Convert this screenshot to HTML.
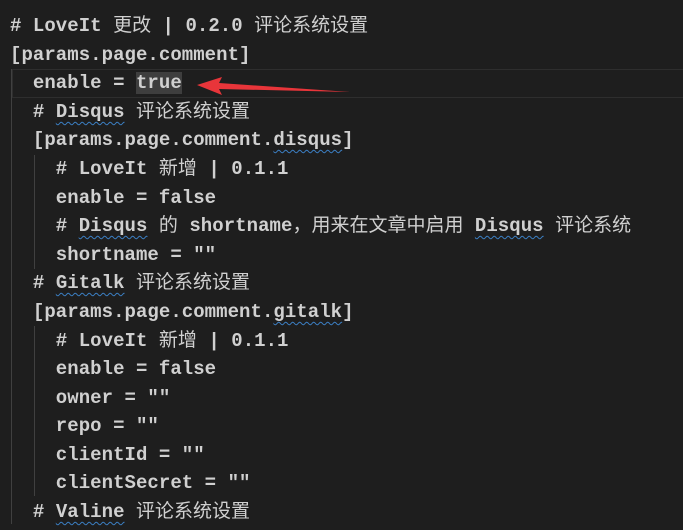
<!DOCTYPE html>
<html><head><meta charset="utf-8"><style>
body{margin:0;width:683px;height:524px;background:#1e1e1e;overflow:hidden;position:relative}
.l{position:absolute;left:10px;height:28.6px;line-height:28.6px;white-space:pre;color:#d0d0d0;font:bold 19px "Liberation Mono","Noto Sans CJK SC",monospace;letter-spacing:0.05px;margin-top:4px}
.c{font-family:"Noto Sans CJK SC",sans-serif;font-weight:normal;font-size:19px;letter-spacing:0;line-height:0}
.w{text-decoration:underline wavy #3b7fc4;text-decoration-thickness:1px;text-underline-offset:4px}
.g{position:absolute;width:1px;background:#404040}
.hl{background:#3e3e3e}
</style></head><body>
<div style="position:absolute;left:12px;top:69px;width:680px;height:27px;border:1px solid #2e2e2e"></div>
<div class="g" style="left:11px;top:69px;height:455px"></div>
<div class="g" style="left:34px;top:155px;height:114px"></div>
<div class="g" style="left:34px;top:326px;height:170px"></div>
<div class="l" style="top:11px"># LoveIt <span class="c">更改</span> | 0.2.0 <span class="c">评论系统设置</span></div>
<div class="l" style="top:40px">[params.page.comment]</div>
<div class="l" style="top:68px">  enable = <span class="hl">true</span></div>
<div class="l" style="top:97px">  # <span class="w">Disqus</span> <span class="c">评论系统设置</span></div>
<div class="l" style="top:125px">  [params.page.comment.<span class="w">disqus</span>]</div>
<div class="l" style="top:154px">    # LoveIt <span class="c">新增</span> | 0.1.1</div>
<div class="l" style="top:183px">    enable = false</div>
<div class="l" style="top:211px">    # <span class="w">Disqus</span> <span class="c">的</span> shortname<span class="c">，用来在文章中启用</span> <span class="w">Disqus</span> <span class="c">评论系统</span></div>
<div class="l" style="top:240px">    shortname = ""</div>
<div class="l" style="top:268px">  # <span class="w">Gitalk</span> <span class="c">评论系统设置</span></div>
<div class="l" style="top:297px">  [params.page.comment.<span class="w">gitalk</span>]</div>
<div class="l" style="top:326px">    # LoveIt <span class="c">新增</span> | 0.1.1</div>
<div class="l" style="top:354px">    enable = false</div>
<div class="l" style="top:383px">    owner = ""</div>
<div class="l" style="top:411px">    repo = ""</div>
<div class="l" style="top:440px">    clientId = ""</div>
<div class="l" style="top:468px">    clientSecret = ""</div>
<div class="l" style="top:497px">  # <span class="w">Valine</span> <span class="c">评论系统设置</span></div>
<svg style="position:absolute;left:0;top:0" width="683" height="524">
<polygon points="197,85 222,77 219,83 350,92 219,89 222,95" fill="#e8353a"/>
</svg>
</body></html>
